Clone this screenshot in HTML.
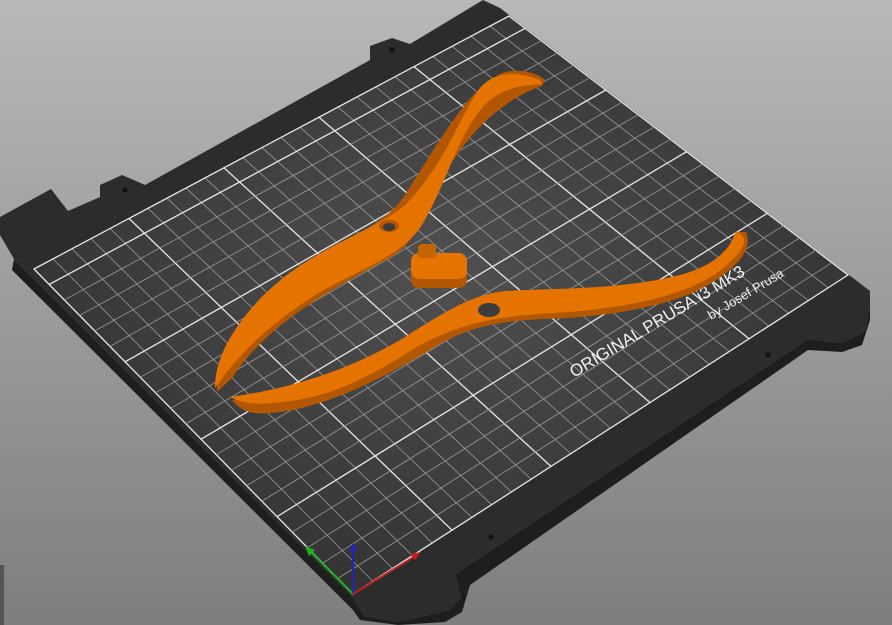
<!DOCTYPE html>
<html><head><meta charset="utf-8"><style>
html,body{margin:0;padding:0;width:892px;height:625px;overflow:hidden;background:#999}
svg{display:block}
</style></head><body>
<svg id="s" width="892" height="625" viewBox="0 0 892 625" xmlns="http://www.w3.org/2000/svg">
<defs>
<linearGradient id="bg" x1="0" y1="0" x2="0" y2="1">
<stop offset="0" stop-color="#b8b8b8"/><stop offset="1" stop-color="#7e7e7e"/></linearGradient>
<radialGradient id="bed" cx="0.5" cy="0.45" r="0.6">
<stop offset="0" stop-color="#505050"/><stop offset="1" stop-color="#303030"/></radialGradient>
</defs>
<rect width="892" height="625" fill="url(#bg)"/>
<rect x="0" y="565" width="4" height="60" fill="#555"/>
<polygon points="14,259 353,598 364,616 398,622 449,610 461,598 455,574 808,339 842,343 865,331 870,303 870,320 862,345 842,352 808,350 470,585 462,612 445,622 398,625 360,620 353,610 12,270" fill="#1e1e1e"/>
<polygon points="483,0 500,8 870,291 870,303 865,331 842,343 808,339 455,574 461,598 449,610 398,622 364,616 353,598 14,259 0,235 0,217 51,189 68,211 100,197 100,185 122,175 145,185 370,60 370,46 392,38 410,44" fill="#2c2c2c"/>
<polygon points="34,269 509,16 848,275 353,594" fill="url(#bed)"/>
<g id="grid" stroke-linecap="round"></g>
<circle cx="392" cy="50" r="2.5" fill="#111"/>
<circle cx="125" cy="190" r="2.5" fill="#111"/>
<circle cx="768" cy="355" r="2.5" fill="#111"/>
<circle cx="491" cy="537" r="2.5" fill="#111"/>
<g font-family="Liberation Sans, sans-serif" fill="#f2f2f2">
<text x="574" y="378" font-size="17" transform="rotate(-31 574 378)">ORIGINAL PRUSA i3 MK3</text>
<text x="711" y="320" font-size="13" transform="rotate(-31 711 320)">by Josef Prusa</text>
</g>
<path d="M542,86 C520,93 480,115 447,170 C425,215 420,235 395,255 C340,285 270,320 232,378 L217,392 C215,350 250,310 300,270 C350,235 385,225 405,195 C440,140 470,85 505,72 C525,68 540,75 545,80 Z" fill="#b25700"/>
<path d="M540,80 C520,72 495,70 480,88 C460,115 445,165 405,205 C370,235 300,250 250,310 C225,340 215,365 215,388 C235,360 260,330 320,292 C370,265 400,255 420,228 C445,190 460,125 490,100 C510,85 530,85 542,84 Z" fill="#e47300"/>
<ellipse cx="389" cy="226" rx="10" ry="6" fill="#b25700"/>
<ellipse cx="389" cy="227" rx="6" ry="4" fill="#3a3a3a"/>
<path d="M232,400 C240,410 250,415 270,413 C320,410 380,380 430,350 C470,325 500,320 569,318 C640,312 700,300 735,265 C748,252 750,242 746,232 L736,232 C735,255 720,268 680,280 C620,296 560,292 505,296 C470,300 440,320 400,345 C330,385 270,395 232,400 Z" fill="#b25700"/>
<path d="M230,397 C245,405 260,405 290,401 C340,395 380,370 420,345 C470,320 500,316 569,312 C640,306 700,292 730,262 C748,245 748,238 736,231 C730,250 715,265 680,275 C620,290 560,288 505,291 C470,295 445,312 400,340 C340,375 280,390 230,397 Z" fill="#e47300"/>
<ellipse cx="489" cy="310" rx="11" ry="7" fill="#3c3c3c"/>
<rect x="411" y="258" width="56" height="30" rx="8" fill="#b25700"/>
<rect x="411" y="253" width="56" height="26" rx="8" fill="#e47300"/>
<rect x="418" y="244" width="18" height="14" rx="4" fill="#c46400"/>
<line x1="353" y1="594" x2="309" y2="550" stroke="#22b022" stroke-width="2"/>
<line x1="353" y1="594" x2="353" y2="548" stroke="#2222c0" stroke-width="2"/>
<line x1="353" y1="594" x2="417" y2="555" stroke="#c02020" stroke-width="2"/>
<polygon points="305,546 315,550 309,556" fill="#22b022"/>
<polygon points="353,543 349,551 357,551" fill="#2222c0"/>
<polygon points="421,552 410,554 415,560" fill="#c02020"/>
</svg>
<script>
var g=document.getElementById('grid');
var O=[353,594],X=[848,275],Y=[34,269],XY=[509,16];
function P(u,v){return[(1-u)*(1-v)*O[0]+u*(1-v)*X[0]+(1-u)*v*Y[0]+u*v*XY[0],(1-u)*(1-v)*O[1]+u*(1-v)*X[1]+(1-u)*v*Y[1]+u*v*XY[1]];}
var s='';
function L(a,b,maj){s+='<line x1="'+a[0]+'" y1="'+a[1]+'" x2="'+b[0]+'" y2="'+b[1]+'" stroke="'+(maj?'#e8e8e8':'#9a9a9a')+'" stroke-width="'+(maj?1.3:0.8)+'"/>';}
for(var i=0;i<=25;i++){var u=i/25;L(P(u,0),P(u,1),i%5==0);}
for(var j=0;j<=21;j++){var v=j/21;L(P(0,v),P(1,v),j%5==0||j==21);}
g.innerHTML=s;
</script>
</body></html>
